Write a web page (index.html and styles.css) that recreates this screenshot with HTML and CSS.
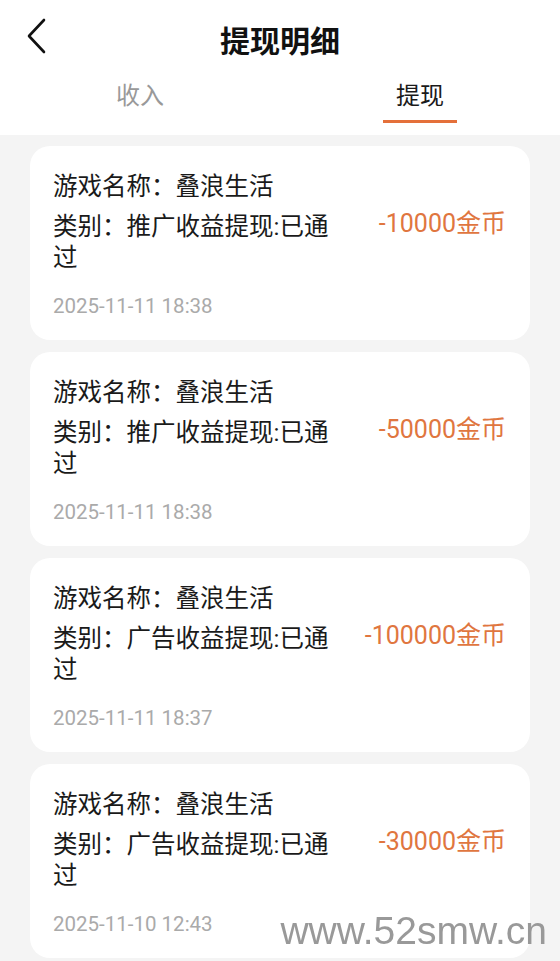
FILE: index.html
```html
<!DOCTYPE html>
<html lang="zh-CN">
<head>
    <meta charset="utf-8" />
    <title>提现明细</title>
    <meta name="viewport" content="width=device-width, initial-scale=1.0" />
    <link rel="stylesheet" href="styles.css">
</head>
<body>
<header class="top">
    <div class="topbar">
        <a class="back" href="#">
            <svg width="20" height="36" viewBox="0 0 20 36"><path d="M18 2 L3 18 L18 34" fill="none" stroke="#111" stroke-width="2.6" stroke-linecap="round" stroke-linejoin="round"/></svg>
        </a>
        <h1 class="title">提现明细</h1>
        <span></span>
    </div>
    <nav class="tabs">
        <div class="tab">收入</div>
        <div class="tab active">提现</div>
    </nav>
</header>

<main class="list">
    <div class="card">
        <div class="name">游戏名称：叠浪生活</div>
        <div class="row">
            <div class="cat">类别：推广收益提现:已通过</div>
            <div class="amount">-10000金币</div>
        </div>
        <div class="date">2025-11-11 18:38</div>
    </div>
    <div class="card">
        <div class="name">游戏名称：叠浪生活</div>
        <div class="row">
            <div class="cat">类别：推广收益提现:已通过</div>
            <div class="amount">-50000金币</div>
        </div>
        <div class="date">2025-11-11 18:38</div>
    </div>
    <div class="card">
        <div class="name">游戏名称：叠浪生活</div>
        <div class="row">
            <div class="cat">类别：广告收益提现:已通过</div>
            <div class="amount">-100000金币</div>
        </div>
        <div class="date">2025-11-11 18:37</div>
    </div>
    <div class="card">
        <div class="name">游戏名称：叠浪生活</div>
        <div class="row">
            <div class="cat">类别：广告收益提现:已通过</div>
            <div class="amount">-30000金币</div>
        </div>
        <div class="date">2025-11-10 12:43</div>
    </div>
</main>

<div class="watermark">www.52smw.cn</div>
</body>
</html>
```

FILE: styles.css
```css
body {
    margin: 0;
    background: #f4f4f4;
    font-family: Roboto, "Noto Sans CJK SC", sans-serif;
    color: #1a1a1a;
    height: 961px;
    overflow: hidden;
}
.top {
    background: #fff;
}
.topbar {
    height: 76px;
    display: grid;
    grid-template-columns: 1fr auto 1fr;
    align-items: center;
}
.back {
    display: flex;
    padding-left: 26px;
    margin-top: -5px;
}
.title {
    margin: 0;
    font-size: 30px;
    font-weight: bold;
    color: #111;
    margin-top: 2px;
}
.tabs {
    display: grid;
    grid-template-columns: 1fr 1fr;
    height: 59px;
}
.tab {
    text-align: center;
    font-size: 24px;
    line-height: 28px;
    padding-top: 6px;
    color: #999;
}
.tab.active {
    color: #1a1a1a;
}
.tab.active::after {
    content: "";
    display: block;
    width: 74px;
    height: 3px;
    margin: 10px auto 0;
    background: #e4703a;
}
.list {
    padding: 11px 30px;
    display: flex;
    flex-direction: column;
    gap: 12px;
}
.card {
    background: #fff;
    border-radius: 20px;
    padding: 25px 24px 20px 23px;
}
.name {
    font-size: 24.5px;
    line-height: 31px;
    margin-bottom: 9px;
}
.row {
    display: grid;
    grid-template-columns: 288px 1fr;
}
.cat {
    font-size: 24.5px;
    line-height: 31px;
}
.amount {
    text-align: right;
    font-size: 25px;
    line-height: 26px;
    color: #e0763f;
    white-space: nowrap;
}
.date {
    margin-top: 19px;
    font-size: 20.5px;
    line-height: 28px;
    color: #aaa;
}
.watermark {
    position: fixed;
    right: 13px;
    bottom: 11px;
    font-family: "Liberation Sans", Arial, sans-serif;
    font-size: 39px;
    line-height: 1;
    color: #999;
}
```
